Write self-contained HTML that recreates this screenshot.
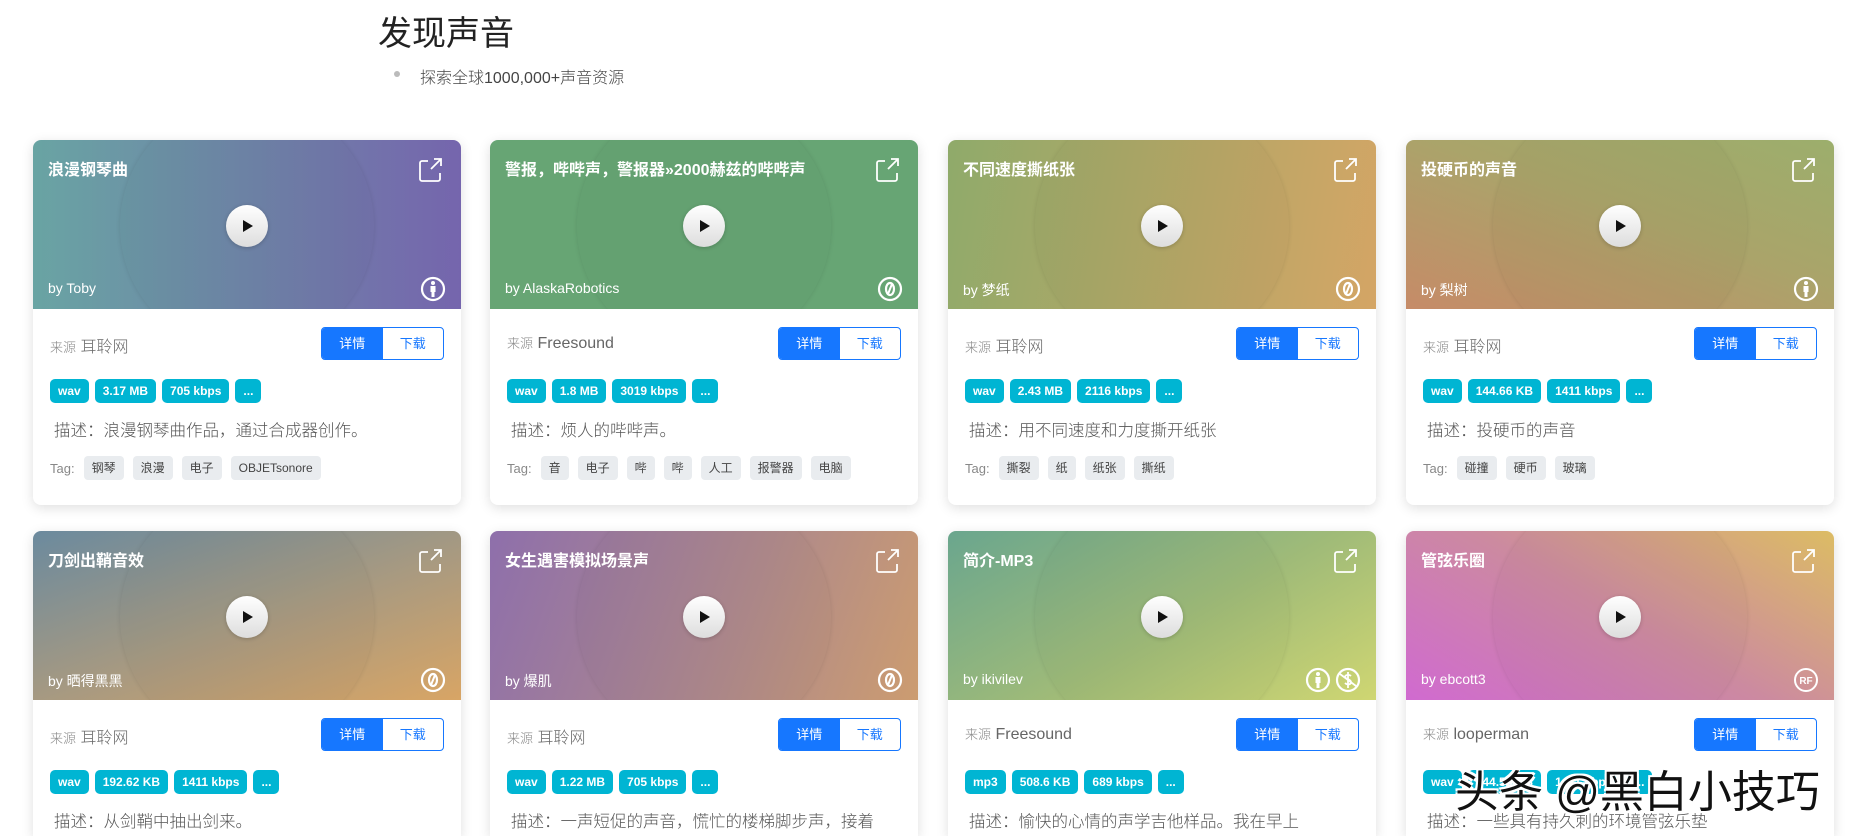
<!DOCTYPE html>
<html style="overflow:hidden;height:836px"><head><meta charset="utf-8"><style>
*{box-sizing:border-box;margin:0;padding:0}
body{width:1873px;height:836px;overflow:hidden;background:#fff;font-family:"Liberation Sans","Noto Sans CJK SC",sans-serif;position:relative}
h1{position:absolute;left:378px;top:6px;font-size:34px;font-weight:400;color:#222}
.sub{position:absolute;left:420px;top:64px;font-size:16px;color:#444;font-weight:300}
.sub:before{content:"";position:absolute;left:-26px;top:7px;width:6px;height:6px;border-radius:50%;background:#bbb}
.card{position:absolute;width:428px;height:365px;border-radius:8px;background:#fff;box-shadow:0 3px 12px rgba(0,0,0,.13);overflow:hidden}
.hd{position:relative;height:169px;overflow:hidden;color:#fff}
.ring{position:absolute;left:87px;top:-41px;width:254px;height:254px;border-radius:50%;background:rgba(0,0,0,.02);box-shadow:0 0 5px rgba(0,0,0,.1)}
.tt{position:absolute;left:15px;top:16px;font-size:16px;font-weight:700}
.play{position:absolute;left:193px;top:65px;width:42px;height:42px;border-radius:50%;background:linear-gradient(#fff,#ddd);box-shadow:0 1px 4px rgba(0,0,0,.2)}
.play:after{content:"";position:absolute;left:17px;top:15px;border-left:10px solid #111;border-top:6px solid transparent;border-bottom:6px solid transparent}
.ext{position:absolute;right:18px;top:17px}
.by{position:absolute;left:15px;top:140px;font-size:14px}
.lic{position:absolute;right:15px;top:136px;display:flex;gap:4px}
.bd{position:relative;padding:0 17px}
.src{position:absolute;left:17px;top:24px;font-size:16px;color:#666;font-weight:300}
.src b{font-weight:300;font-size:13px;color:#888}
.btn{position:absolute;right:17px;top:18px;width:123px;height:33px;border:1px solid #1677ff;border-radius:4px;display:flex;overflow:hidden;font-size:13px}
.btn span{flex:1;text-align:center;line-height:31px;color:#1677ff}
.btn span:first-child{background:#1677ff;color:#fff}
.pills{position:absolute;left:17px;top:70px;display:flex;gap:6px}
.pills span{background:#00b5d3;color:#fff;font-weight:700;font-size:12px;height:24px;line-height:24px;padding:0 8px;border-radius:5px}
.desc{position:absolute;left:21px;top:108px;font-size:16.5px;color:#555;white-space:nowrap;font-weight:300}
.tags{position:absolute;left:17px;top:147px;display:flex;gap:9px;align-items:center;font-size:13px;color:#888;font-weight:300}
.tags span{background:#e9ecef;color:#444;height:24px;line-height:24px;padding:0 8px;border-radius:4px;font-size:12px;font-weight:400}
.r2{height:305px;border-radius:8px 8px 0 0}
.wm{position:absolute;left:1455px;top:756px;font-size:44px;color:#111;white-space:nowrap;text-shadow:2px 2px 0 #fff,-2px -2px 0 #fff,2px -2px 0 #fff,-2px 2px 0 #fff}
</style></head><body>
<h1>发现声音</h1>
<div class="sub">探索全球1000,000+声音资源</div>

<svg width="0" height="0" style="position:absolute"><defs>
<symbol id="ext" viewBox="0 0 26 26"><path d="M11 4H5a2 2 0 0 0-2 2v16a2 2 0 0 0 2 2h16a2 2 0 0 0 2-2v-6M14 12L24 2M17 2h7v7" fill="none" stroke="#fff" stroke-width="1.8"/></symbol>
<symbol id="by" viewBox="0 0 26 26"><circle cx="13" cy="13" r="11" fill="none" stroke="#fff" stroke-width="2.2"/><circle cx="13" cy="7" r="2" fill="#fff"/><rect x="10.5" y="10" width="5" height="6" fill="#fff"/><rect x="11.5" y="15" width="3" height="6" fill="#fff"/></symbol>
<symbol id="zero" viewBox="0 0 26 26"><circle cx="13" cy="13" r="11" fill="none" stroke="#fff" stroke-width="2.2"/><ellipse cx="13" cy="13" rx="4" ry="6" fill="none" stroke="#fff" stroke-width="2.2"/><path d="M15 8L11 18" stroke="#fff" stroke-width="2"/></symbol>
<symbol id="nc" viewBox="0 0 26 26"><circle cx="13" cy="13" r="11" fill="none" stroke="#fff" stroke-width="2.2"/><path d="M5 7L21 19M16 9c-2-2-6-1-6 1s6 2 6 5-4 3-6 1M13 5v16" fill="none" stroke="#fff" stroke-width="1.8"/></symbol>
<symbol id="rf" viewBox="0 0 26 26"><circle cx="13" cy="13" r="11" fill="none" stroke="#fff" stroke-width="2"/><text x="13" y="17" text-anchor="middle" font-size="10" font-weight="700" fill="#fff" font-family="Liberation Sans">RF</text></symbol>
</defs></svg>

<div class="card" style="left:33px;top:140px"><div class="hd" style="background:linear-gradient(90deg,#69a4a3,#7565ad)"><div class="ring"></div><div class="tt">浪漫钢琴曲</div><svg class="ext" width="26" height="26"><use href="#ext"/></svg><div class="play"></div><div class="by">by Toby</div><div class="lic"><svg width="26" height="26"><use href="#by"/></svg></div></div>
<div class="bd"><div class="src"><b>来源</b> 耳聆网</div><div class="btn"><span>详情</span><span>下载</span></div><div class="pills"><span>wav</span><span>3.17 MB</span><span>705 kbps</span><span>...</span></div><div class="desc">描述：浪漫钢琴曲作品，通过合成器创作。</div><div class="tags">Tag:<span>钢琴</span><span>浪漫</span><span>电子</span><span>OBJETsonore</span></div></div></div>

<div class="card" style="left:490px;top:140px"><div class="hd" style="background:#67a574"><div class="ring"></div><div class="tt">警报，哔哔声，警报器»2000赫兹的哔哔声</div><svg class="ext" width="26" height="26"><use href="#ext"/></svg><div class="play"></div><div class="by">by AlaskaRobotics</div><div class="lic"><svg width="26" height="26"><use href="#zero"/></svg></div></div>
<div class="bd"><div class="src"><b>来源</b> Freesound</div><div class="btn"><span>详情</span><span>下载</span></div><div class="pills"><span>wav</span><span>1.8 MB</span><span>3019 kbps</span><span>...</span></div><div class="desc">描述：烦人的哔哔声。</div><div class="tags">Tag:<span>音</span><span>电子</span><span>哔</span><span>哔</span><span>人工</span><span>报警器</span><span>电脑</span></div></div></div>

<div class="card" style="left:948px;top:140px"><div class="hd" style="background:linear-gradient(100deg,#8faa6a,#d4a565)"><div class="ring"></div><div class="tt">不同速度撕纸张</div><svg class="ext" width="26" height="26"><use href="#ext"/></svg><div class="play"></div><div class="by">by 梦纸</div><div class="lic"><svg width="26" height="26"><use href="#zero"/></svg></div></div>
<div class="bd"><div class="src"><b>来源</b> 耳聆网</div><div class="btn"><span>详情</span><span>下载</span></div><div class="pills"><span>wav</span><span>2.43 MB</span><span>2116 kbps</span><span>...</span></div><div class="desc">描述：用不同速度和力度撕开纸张</div><div class="tags">Tag:<span>撕裂</span><span>纸</span><span>纸张</span><span>撕纸</span></div></div></div>

<div class="card" style="left:1406px;top:140px"><div class="hd" style="background:linear-gradient(20deg,#c68b68,#aaa46a 55%,#9cae6c)"><div class="ring"></div><div class="tt">投硬币的声音</div><svg class="ext" width="26" height="26"><use href="#ext"/></svg><div class="play"></div><div class="by">by 梨树</div><div class="lic"><svg width="26" height="26"><use href="#by"/></svg></div></div>
<div class="bd"><div class="src"><b>来源</b> 耳聆网</div><div class="btn"><span>详情</span><span>下载</span></div><div class="pills"><span>wav</span><span>144.66 KB</span><span>1411 kbps</span><span>...</span></div><div class="desc">描述：投硬币的声音</div><div class="tags">Tag:<span>碰撞</span><span>硬币</span><span>玻璃</span></div></div></div>

<div class="card r2" style="left:33px;top:531px"><div class="hd" style="background:linear-gradient(160deg,#6b8a9e,#a99a80 55%,#d8a565)"><div class="ring"></div><div class="tt">刀剑出鞘音效</div><svg class="ext" width="26" height="26"><use href="#ext"/></svg><div class="play"></div><div class="by">by 晒得黑黑</div><div class="lic"><svg width="26" height="26"><use href="#zero"/></svg></div></div>
<div class="bd"><div class="src"><b>来源</b> 耳聆网</div><div class="btn"><span>详情</span><span>下载</span></div><div class="pills"><span>wav</span><span>192.62 KB</span><span>1411 kbps</span><span>...</span></div><div class="desc">描述：从剑鞘中抽出剑来。</div></div></div>

<div class="card r2" style="left:490px;top:531px"><div class="hd" style="background:linear-gradient(110deg,#8e6fab,#b08a8a 60%,#cc9c70)"><div class="ring"></div><div class="tt">女生遇害模拟场景声</div><svg class="ext" width="26" height="26"><use href="#ext"/></svg><div class="play"></div><div class="by">by 爆肌</div><div class="lic"><svg width="26" height="26"><use href="#zero"/></svg></div></div>
<div class="bd"><div class="src"><b>来源</b> 耳聆网</div><div class="btn"><span>详情</span><span>下载</span></div><div class="pills"><span>wav</span><span>1.22 MB</span><span>705 kbps</span><span>...</span></div><div class="desc">描述：一声短促的声音，慌忙的楼梯脚步声，接着</div></div></div>

<div class="card r2" style="left:948px;top:531px"><div class="hd" style="background:linear-gradient(150deg,#6aa68e,#a0bb78 55%,#cfd672)"><div class="ring"></div><div class="tt">简介-MP3</div><svg class="ext" width="26" height="26"><use href="#ext"/></svg><div class="play"></div><div class="by">by ikivilev</div><div class="lic"><svg width="26" height="26"><use href="#by"/></svg><svg width="26" height="26"><use href="#nc"/></svg></div></div>
<div class="bd"><div class="src"><b>来源</b> Freesound</div><div class="btn"><span>详情</span><span>下载</span></div><div class="pills"><span>mp3</span><span>508.6 KB</span><span>689 kbps</span><span>...</span></div><div class="desc">描述：愉快的心情的声学吉他样品。我在早上</div></div></div>

<div class="card r2" style="left:1406px;top:531px"><div class="hd" style="background:linear-gradient(30deg,#d06ad0,#cc8aa0 50%,#dcbc64)"><div class="ring"></div><div class="tt">管弦乐圈</div><svg class="ext" width="26" height="26"><use href="#ext"/></svg><div class="play"></div><div class="by">by ebcott3</div><div class="lic"><svg width="26" height="26"><use href="#rf"/></svg></div></div>
<div class="bd"><div class="src"><b>来源</b> looperman</div><div class="btn"><span>详情</span><span>下载</span></div><div class="pills"><span>wav</span><span>144.55 KB</span><span>1411 kbps</span><span>...</span></div><div class="desc">描述：一些具有持久刺的环境管弦乐垫</div></div></div>

<div class="wm">头条 @黑白小技巧</div>
</body></html>
